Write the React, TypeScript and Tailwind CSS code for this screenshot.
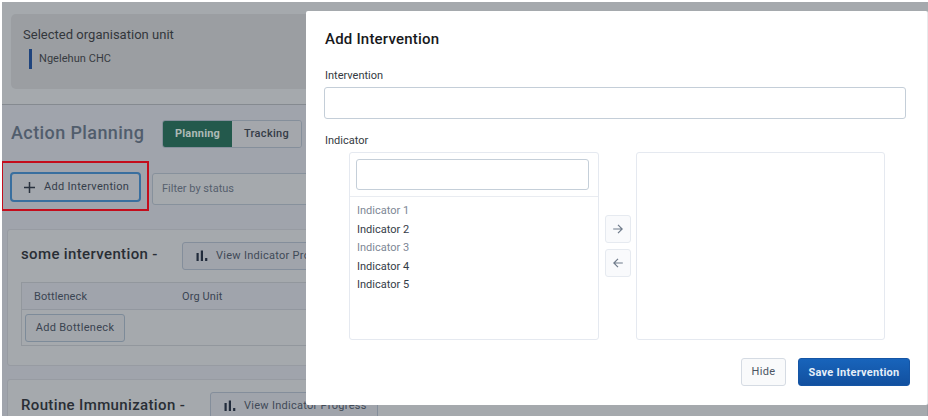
import React from "react";

function BarsIcon() {
  return (
    <svg className="h-3 w-3 shrink-0" viewBox="0 0 12 12" fill="#222c3c">
      <rect x="0.5" y="3" width="2.2" height="8" />
      <rect x="4.8" y="0.5" width="2.2" height="10.5" />
      <rect x="9.1" y="8" width="2.2" height="3" />
    </svg>
  );
}

function ArrowIcon({ left = false }: { left?: boolean }) {
  return (
    <svg
      className={left ? "h-[10px] w-[10px] rotate-180" : "h-[10px] w-[10px]"}
      viewBox="0 0 10 10"
      fill="none"
      stroke="#6e7a8a"
      strokeWidth="1.2"
    >
      <path d="M0.2 5H9M5 0.8L9.2 5L5 9.2" />
    </svg>
  );
}

function ProgressButton() {
  return (
    <div className="flex h-7 w-[168px] shrink-0 items-center gap-[8px] rounded-[3px] border border-[#848e9b] bg-[#a0a4ab] pl-[13px] text-[11px] tracking-[0.28px] text-[#414a57]">
      <BarsIcon />
      <span className="pt-px whitespace-nowrap">View Indicator Progress</span>
    </div>
  );
}

function OrgUnitHeader() {
  return (
    <header className="h-[103px] border-b border-[#858a90] bg-[#a5a9ad] pt-3 pl-[9px]">
      <div className="h-[75px] rounded-[5px] bg-[#9b9ea2] pt-[11px] pl-3">
        <div className="pt-px text-[13px] leading-[18px] tracking-[0.02px] text-[#33373c]">Selected organisation unit</div>
        <div className="mt-[5px] ml-[6px] flex h-5 items-center border-l-[3px] border-[#1f447d] pt-px pl-[7px] text-[11px] tracking-[0.05px] text-[#373b41]">
          Ngelehun CHC
        </div>
      </div>
    </header>
  );
}

function Planning() {
  return (
    <main className="bg-[#a0a4ac]">
      <div className="flex h-[56px] items-center pt-px pl-[9px]">
        <h1 className="w-[151px] pb-[2px] text-[18px] leading-6 font-medium tracking-[0.4px] text-[#515d6c]">Action Planning</h1>
        <div className="flex h-7 w-[140px] overflow-hidden rounded-[3px] border border-[#858f9b] text-[11px] font-medium tracking-[0.3px]">
          <div className="flex w-[69px] items-center justify-center bg-[#23594c] pt-[2px] font-bold tracking-[0.2px] text-[#adb9b6]">Planning</div>
          <div className="flex flex-1 items-center justify-center bg-[#a4a7ac] pt-[2px] text-[#353c47]">Tracking</div>
        </div>
      </div>
      <div className="flex h-[50px] items-center">
        <div className="flex h-[50px] w-[147px] items-center border-2 border-l-1 border-[#c40d1c] pt-[2px] pl-[7px]">
          <div className="flex h-[30px] w-[131px] items-center rounded-[4px] border-2 border-[#396f9f] bg-[#a3a7ad] pl-[12px] text-[11px] tracking-[0.3px] text-[#353e4b]">
            <svg className="mr-[9px] h-[11px] w-[11px]" viewBox="0 0 11 11" stroke="#29323f" strokeWidth="1.5">
              <path d="M0 5.5H11M5.5 0V11" />
            </svg>
            <span className="pt-px whitespace-nowrap">Add Intervention</span>
          </div>
        </div>
        <div className="mt-[5px] ml-[3px] flex h-8 flex-1 items-center rounded-[3px] border border-[#87919c] bg-[#a5a9ad] pt-px pl-[9px] text-[11px] text-[#56606d]">
          Filter by status
        </div>
      </div>

      <section className="mt-[18px] ml-[5px] h-[137px] rounded-[3px] border border-[#979ba2] bg-[#a5a9ad] pt-[12px] pl-[13px]">
        <div className="flex h-7 items-center">
          <h2 className="w-[161px] pb-[3px] text-[15px] font-medium tracking-[0.36px] text-[#292e35]">some intervention -</h2>
          <ProgressButton />
        </div>
        <div className="mt-[12px] h-[64px] border border-[#92979d]">
          <div className="flex h-[27px] items-center border-b border-[#92979f] bg-[#a0a4ac] pt-[2px] pl-[12px] text-[11px] tracking-[0.1px] text-[#3b4553]">
            <span className="w-[148px]">Bottleneck</span>
            <span>Org Unit</span>
          </div>
          <div className="pt-[4px] pl-[3px]">
            <div className="flex h-[28px] w-[100px] items-center justify-center rounded-[3px] border border-[#7d8b99] bg-[#a2a6ab] pt-px text-[11px] tracking-[0.3px] text-[#3a4451]">
              Add Bottleneck
            </div>
          </div>
        </div>
      </section>

      <section className="mt-[13px] ml-[5px] h-[60px] rounded-[3px] border border-[#979ba2] bg-[#a5a9ad] pt-[12px] pl-[13px]">
        <div className="flex h-7 items-center">
          <h2 className="w-[189px] pb-[2px] text-[15px] font-medium tracking-[0.36px] text-[#292e35]">Routine Immunization -</h2>
          <ProgressButton />
        </div>
      </section>
    </main>
  );
}

const indicators = [
  { name: "Indicator 1", muted: true },
  { name: "Indicator 2", muted: false },
  { name: "Indicator 3", muted: true },
  { name: "Indicator 4", muted: false },
  { name: "Indicator 5", muted: false },
];

function InterventionDialog() {
  return (
    <div className="absolute top-[9px] left-[304px] h-[394px] w-[622px] rounded-[2px] border-r border-[#e8e9eb] bg-white pt-[17px] pl-[18px] text-[11px] text-[#343a42]">
      <h2 className="pl-px text-[15px] leading-[22px] font-medium tracking-[0.2px] text-[#17191c]">Add Intervention</h2>
      <div className="mt-[18px] pl-px leading-4">Intervention</div>
      <div className="mt-[3px] h-8 w-[582px] rounded-[3px] border border-[#c4ced8]" />
      <div className="mt-[14px] pl-px leading-4">Indicator</div>
      <div className="mt-[3px] ml-[25px] flex h-[188px]">
        <div className="w-[250px] rounded-[3px] border border-[#e5e9f0]">
          <div className="border-b border-[#e9ecf1] px-[6px] pt-[6px] pb-[6px]">
            <div className="h-[31px] w-[233px] rounded-[3px] border border-[#c5cfd9]" />
          </div>
          <ul className="pt-[5px] pl-[7px]">
            {indicators.map((i) => (
              <li
                key={i.name}
                className={i.muted ? "h-[18.5px] leading-[18.5px] text-[#7d8795]" : "h-[18.5px] leading-[18.5px] text-[#343c47]"}
              >
                {i.name}
              </li>
            ))}
          </ul>
        </div>
        <div className="flex w-[37px] flex-col items-center justify-center gap-[6px]">
          <div className="flex h-7 w-[26px] items-center justify-center rounded-[3px] border border-[#e6eaf0] bg-[#f9fafc]">
            <ArrowIcon />
          </div>
          <div className="flex h-7 w-[26px] items-center justify-center rounded-[3px] border border-[#e6eaf0] bg-[#f9fafc]">
            <ArrowIcon left />
          </div>
        </div>
        <div className="w-[249px] rounded-[3px] border border-[#e5e9f0]" />
      </div>
      <div className="mt-[18px] mr-[17px] flex h-7 justify-end gap-3">
        <div className="flex w-[45px] items-center justify-center rounded-[3px] border border-[#d5dbe3] bg-[#f9fafb] pt-px tracking-[0.4px] text-[#4b5563]">
          Hide
        </div>
        <div className="flex w-[112px] items-center justify-center rounded-[3px] border border-[#1555a5] bg-linear-to-b from-[#1864bb] to-[#12509f] pt-[2px] text-[11px] font-bold tracking-[0.26px] whitespace-nowrap text-[#e6eff9]">
          Save Intervention
        </div>
      </div>
    </div>
  );
}

export default function App() {
  return (
    <div className="h-[420px] w-[928px] overflow-hidden bg-white pt-[2px] pl-[2px] font-[Roboto,sans-serif]">
      <div className="relative h-[414px] w-[926px] overflow-hidden bg-[#a0a4ac]">
        <OrgUnitHeader />
        <Planning />
        <InterventionDialog />
      </div>
    </div>
  );
}
